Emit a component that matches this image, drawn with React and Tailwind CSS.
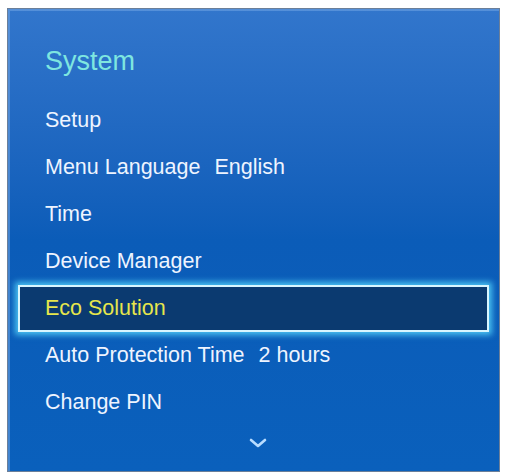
const items = [
  { label: 'Setup' },
  { label: 'Menu Language', value: 'English' },
  { label: 'Time' },
  { label: 'Device Manager' },
  { label: 'Eco Solution', active: true },
  { label: 'Auto Protection Time', value: '2 hours' },
  { label: 'Change PIN' },
];

export default function App() {
  return (
    <div className="w-[507px] h-[475px] bg-white pt-[8px] pl-[7px]" style={{ fontFamily: '"Liberation Sans", Arial, sans-serif' }}>
      <div className="w-[493px] h-[464px] border border-[#6b7f99] bg-gradient-to-b from-[#3276cc] via-[#0b5cb8] to-[#0a60bc] shadow-[inset_2px_2px_0_rgba(120,170,230,0.5)] flex flex-col">
        {/* title */}
        <div className="pt-[32px] pl-[37px] h-[88px] text-[27px] leading-[40px] text-[#7ee6e0]">System</div>

        {/* menu rows */}
        <div className="flex flex-col">
          {items.map((it) => (
            <div
              key={it.label}
              className={
                it.active
                  ? 'mx-[10px] h-[47px] flex items-center pl-[25px] bg-[#0b3a70] border-2 border-[#d8f6ff] shadow-[0_0_6px_3px_rgba(90,220,255,0.8)] text-[#e6e64c] text-[21.5px]'
                  : 'h-[47px] flex items-center pl-[37px] text-[#eef4ff] text-[21.5px]'
              }
            >
              <span>{it.label}</span>
              {it.value && <span className="ml-[14px]">{it.value}</span>}
            </div>
          ))}
        </div>

        <div className="flex-1 flex items-start justify-center pt-[12px]">
          {/* scroll-down chevron */}
          <svg width="18" height="10" viewBox="0 0 18 10" className="ml-[8px]">
            <polyline points="2,2 9,8 16,2" fill="none" stroke="#b8dcff" strokeWidth="2.6" strokeLinecap="round" strokeLinejoin="round" />
          </svg>
        </div>
      </div>
    </div>
  );
}
